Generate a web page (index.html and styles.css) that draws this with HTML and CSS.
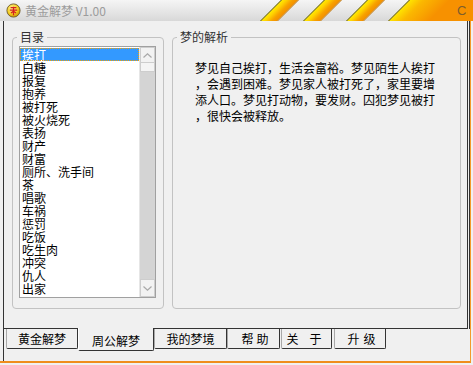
FILE: index.html
```html
<!DOCTYPE html>
<html lang="zh-CN">
<head>
<meta charset="utf-8">
<title>黄金解梦 V1.00</title>
<link rel="stylesheet" href="styles.css">
</head>
<body>
<div class="window">
  <div class="titlebar">
    <svg class="app-icon" viewBox="0 0 15 15" width="15" height="15">
      <defs>
        <radialGradient id="ig" cx="0.4" cy="0.35" r="0.7">
          <stop offset="0" stop-color="#fff6a0"/>
          <stop offset="0.6" stop-color="#f4cd1c"/>
          <stop offset="1" stop-color="#c48a00"/>
        </radialGradient>
      </defs>
      <circle cx="7.5" cy="7.5" r="6.6" fill="url(#ig)" stroke="#6e5a2c" stroke-width="0.9"/>
      <path d="M4.6 4.6H10.4M3.8 7.2H11.2M7.5 3.8V12.3M5 10L7.5 8.2M10 10L7.5 8.2" stroke="#d42020" stroke-width="1.3" fill="none"/>
    </svg>
    <span class="title">黄金解梦 V1.00</span>
    <div class="title-deco">
      <svg class="stripes" width="195" height="21" viewBox="0 0 195 21">
        <defs>
          <linearGradient id="sg" x1="0" y1="0" x2="1" y2="0">
            <stop offset="0" stop-color="#fff000"/>
            <stop offset="0.3" stop-color="#ffd200"/>
            <stop offset="0.65" stop-color="#f7a000"/>
            <stop offset="1" stop-color="#f28c00"/>
          </linearGradient>
          <linearGradient id="sol" gradientUnits="userSpaceOnUse" x1="149" y1="0" x2="190" y2="0">
            <stop offset="0" stop-color="#ffe800"/>
            <stop offset="0.35" stop-color="#fbb800"/>
            <stop offset="1" stop-color="#f79100"/>
          </linearGradient>
        </defs>
        <g transform="skewX(-45)">
          <rect x="21" y="0" width="18" height="21" fill="url(#sg)"/>
          <rect x="64" y="0" width="18" height="21" fill="url(#sg)"/>
          <rect x="107" y="0" width="18" height="21" fill="url(#sg)"/>
          <rect x="149" y="0" width="90" height="21" fill="url(#sol)"/>
          <path d="M21.5 0V21M64.5 0V21M107.5 0V21M149.5 0V21" stroke="#4a4a4a" stroke-width="1"/>
          <path d="M38.5 0V21M81.5 0V21M124.5 0V21" stroke="#b9a27a" stroke-width="1"/>
        </g>
      </svg>
      <span class="close">C</span>
    </div>
  </div>
  <div class="frame">
    <div class="inner">
      <div class="page">
        <fieldset class="group group-list">
          <legend>目录</legend>
          <div class="listbox">
            <ul class="items">
              <li class="sel">挨打</li>
              <li>白糖</li>
              <li>报复</li>
              <li>抱养</li>
              <li>被打死</li>
              <li>被火烧死</li>
              <li>表扬</li>
              <li>财产</li>
              <li>财富</li>
              <li>厕所、洗手间</li>
              <li>茶</li>
              <li>唱歌</li>
              <li>车祸</li>
              <li>惩罚</li>
              <li>吃饭</li>
              <li>吃生肉</li>
              <li>冲突</li>
              <li>仇人</li>
              <li>出家</li>
            </ul>
            <div class="scrollbar">
              <div class="sb-btn">
                <svg width="9" height="5" viewBox="0 0 9 5"><path d="M0.5 4.5L4.5 0.8L8.5 4.5" fill="none" stroke="#a8a8a8" stroke-width="1.2"/></svg>
              </div>
              <div class="sb-thumb"></div>
              <div class="sb-track"></div>
              <div class="sb-btn sb-down">
                <svg width="9" height="5" viewBox="0 0 9 5"><path d="M0.5 0.5L4.5 4.2L8.5 0.5" fill="none" stroke="#a8a8a8" stroke-width="1.2"/></svg>
              </div>
            </div>
          </div>
        </fieldset>
        <fieldset class="group group-desc">
          <legend>梦的解析</legend>
          <div class="desc">
            <span class="line">梦见自己挨打，生活会富裕。梦见陌生人挨打</span>
            <span class="line">，会遇到困难。梦见家人被打死了，家里要增</span>
            <span class="line">添人口。梦见打动物，要发财。囚犯梦见被打</span>
            <span class="line">，很快会被释放。</span>
          </div>
        </fieldset>
      </div>
      <div class="tabs">
        <div class="tab tab-gold">黄金解梦</div>
        <div class="tab tab-active">周公解梦</div>
        <div class="tab tab-mine">我的梦境</div>
        <div class="tab tab-help">帮助</div>
        <div class="tab tab-about">关于</div>
        <div class="tab tab-up">升级</div>
      </div>
    </div>
  </div>
</div>
</body>
</html>
```
FILE: styles.css
```css
html, body {
  margin: 0;
  padding: 0;
}
body {
  background: #f0f0f0;
  font-family: "Noto Sans CJK SC", "Noto Sans", sans-serif;
  font-size: 12px;
  color: #000;
}
.window {
  width: 473px;
  height: 365px;
  display: flex;
  flex-direction: column;
  overflow: hidden;
}

/* title bar */
.titlebar {
  height: 21px;
  flex: none;
  box-sizing: border-box;
  display: flex;
  align-items: center;
  padding-left: 6px;
  background: linear-gradient(#f5f5f5, #e4e4e4 60%, #d8d8d8);
}
.app-icon {
  display: block;
  flex: none;
  width: 15px;
  height: 15px;
}
.title {
  margin-left: 4px;
  color: #9c9c9c;
  font-size: 12px;
  line-height: 21px;
  white-space: nowrap;
}
.title-deco {
  margin-left: auto;
  display: flex;
  height: 21px;
}
.stripes {
  display: block;
  width: 195px;
  height: 21px;
}
.close {
  width: 18px;
  box-sizing: border-box;
  padding-left: 2px;
  background: #f79100;
  color: #7d5d2c;
  font-family: "Liberation Sans", sans-serif;
  font-size: 13px;
  line-height: 21px;
}

/* frame */
.frame {
  flex: 1;
  display: flex;
  padding-left: 3px;
  margin-right: 2px;
  margin-bottom: 2px;
  border-right: 1px solid #f39a2b;
  border-bottom: 2px solid #ef8d1c;
}
.inner {
  flex: 1;
  display: flex;
  flex-direction: column;
  border-left: 1px solid #333;
}
.page {
  width: 464px;
  height: 308px;
  flex: none;
  box-sizing: border-box;
  border-right: 1px solid #333;
  border-bottom: 1px solid #333;
  box-shadow: 1px 0 0 #f0f0f0, 2px 0 0 #333;
  display: flex;
  align-items: flex-start;
  gap: 8px;
  padding: 9px 0 0 8px;
}

/* group boxes */
.group {
  margin: 0;
  padding: 0;
  min-width: 0;
  height: 279px;
  box-sizing: border-box;
  border: 1px solid #c2c2c2;
  border-radius: 4px;
}
.group-list {
  width: 152px;
}
.group-desc {
  width: 289px;
}
.group legend {
  margin-left: 4px;
  padding: 0 3px;
  font-size: 12px;
  line-height: 14px;
  color: #333;
}

/* list box */
.listbox {
  margin: 2px 0 0 6px;
  width: 137px;
  height: 252px;
  box-sizing: border-box;
  border: 1px solid #a0a0a0;
  background: #fff;
  display: flex;
}
.items {
  flex: 1;
  margin: 0;
  padding: 1px 0 0 0;
  list-style: none;
  overflow: hidden;
}
.items li {
  height: 13px;
  line-height: 13px;
  padding-left: 2px;
  white-space: nowrap;
}
.items li.sel {
  background: #3399ff;
  color: #fff;
  outline: 1px dotted #f5a000;
  outline-offset: -1px;
}
.scrollbar {
  width: 16px;
  flex: none;
  display: flex;
  flex-direction: column;
  background: #d4d4d4;
  border-left: 1px solid #e6e6e6;
  box-sizing: border-box;
}
.sb-btn {
  height: 16px;
  flex: none;
  box-sizing: border-box;
  border: 1px solid #cdcdcd;
  background: #f2f2f2;
  display: flex;
  align-items: center;
  justify-content: center;
}
.sb-btn svg {
  display: block;
}
.sb-down {
  height: 18px;
}
.sb-thumb {
  height: 9px;
  flex: none;
  box-sizing: border-box;
  border: 1px solid #cdcdcd;
  border-top: none;
  background: #f4f4f4;
}
.sb-track {
  flex: 1;
}

/* description */
.desc {
  margin: 16px 0 0 22px;
  line-height: 16px;
}
.desc .line {
  display: block;
  white-space: nowrap;
}

/* tabs */
.tabs {
  display: flex;
  align-items: flex-start;
  padding-left: 2px;
}
.tab {
  height: 20px;
  box-sizing: border-box;
  border-left: 1px solid #a8a8a8;
  border-right: 1px solid #333;
  border-bottom: 1px solid #333;
  border-radius: 0 0 2px 2px;
  display: flex;
  justify-content: center;
  align-items: center;
  padding-top: 1px;
  line-height: 18px;
  white-space: nowrap;
  background: #f0f0f0;
}
.tab-gold {
  width: 72px;
}
.tab-active {
  width: 76px;
  height: 23px;
  margin-top: -1px;
  padding-top: 3px;
  border-left-color: #fff;
}
.tab-mine {
  width: 73px;
}
.tab-help {
  width: 53px;
  letter-spacing: 3px;
  padding-left: 6px;
}
.tab-about {
  width: 51px;
  margin-left: 1px;
  letter-spacing: 11px;
  padding-left: 6px;
}
.tab-up {
  width: 52px;
  margin-left: 2px;
  letter-spacing: 4px;
  padding-left: 7px;
}
```
